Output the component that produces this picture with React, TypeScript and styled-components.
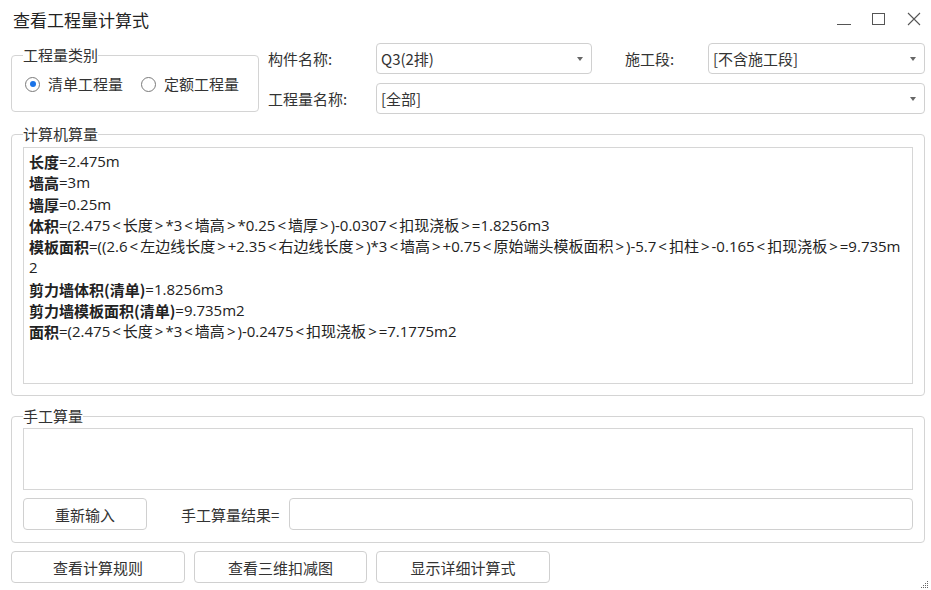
import styled, { createGlobalStyle } from 'styled-components'

const GlobalStyle = createGlobalStyle`
body {
  margin: 0;
  background: #fff;
  font-family: "Noto Sans CJK SC", "Noto Sans", sans-serif;
  color: #333;
}
`

const lines: [string, string][] = [
  ['长度', '=2.475m'],
  ['墙高', '=3m'],
  ['墙厚', '=0.25m'],
  ['体积', '=(2.475<长度>*3<墙高>*0.25<墙厚>)-0.0307<扣现浇板>=1.8256m3'],
  ['模板面积', '=((2.6<左边线长度>+2.35<右边线长度>)*3<墙高>+0.75<原始端头模板面积>)-5.7<扣柱>-0.165<扣现浇板>=9.735m'],
  ['', '2'],
  ['剪力墙体积(清单)', '=1.8256m3'],
  ['剪力墙模板面积(清单)', '=9.735m2'],
  ['面积', '=(2.475<长度>*3<墙高>)-0.2475<扣现浇板>=7.1775m2'],
]

// the angle brackets get a little air on both sides, as in the original font
const formula = (s: string) =>
  s.split(/([<>])/).map((part, i) =>
    part === '<' || part === '>' ? <Angle key={i}>{part}</Angle> : part
  )

const App = () => {
  return (
    <>
      <GlobalStyle />
      <Window>
        <TitleBar>
          <Title>查看工程量计算式</Title>
          <Controls>
            <svg width="14" height="14" viewBox="0 0 14 14">
              <line x1="0" y1="12.5" x2="14" y2="12.5" stroke="#555" strokeWidth="1" />
            </svg>
            <svg width="14" height="14" viewBox="0 0 14 14">
              <rect x="0.5" y="1.5" width="12" height="11" fill="none" stroke="#555" strokeWidth="1" />
            </svg>
            <svg width="14" height="14" viewBox="0 0 14 14">
              <path d="M1 1 L13 13 M13 1 L1 13" stroke="#555" strokeWidth="1.1" />
            </svg>
          </Controls>
        </TitleBar>

        <TopRow>
          <TypeGroup>
            <Legend>工程量类别</Legend>
            <RadioRow>
              <RadioItem>
                <Circle $checked />
                清单工程量
              </RadioItem>
              <RadioItem>
                <Circle />
                定额工程量
              </RadioItem>
            </RadioRow>
          </TypeGroup>

          <Form>
            <FormRow>
              <Label $w={108}>构件名称:</Label>
              <Combo $w={216}>
                <span>Q3(2排)</span>
                <Arrow />
              </Combo>
              <Label $w={83} $ml={33}>施工段:</Label>
              <Combo>
                <span>[不含施工段]</span>
                <Arrow />
              </Combo>
            </FormRow>
            <FormRow>
              <Label $w={108}>工程量名称:</Label>
              <Combo>
                <span>[全部]</span>
                <Arrow />
              </Combo>
            </FormRow>
          </Form>
        </TopRow>

        <Group $mt={10} $pt={3} $pb={11}>
          <Legend>计算机算量</Legend>
          <ResultBox>
            {lines.map(([b, rest], i) => (
              <Line key={i}>
                {b && <b>{b}</b>}
                {formula(rest)}
              </Line>
            ))}
          </ResultBox>
        </Group>

        <Group $mt={10} $pt={2} $pb={12}>
          <Legend>手工算量</Legend>
          <ManualArea />
          <ManualRow>
            <Button $w={124}>重新输入</Button>
            <ResultLabel>手工算量结果=</ResultLabel>
            <ResultInput />
          </ManualRow>
        </Group>

        <BottomBar>
          <Button $w={174}>查看计算规则</Button>
          <Button $w={173}>查看三维扣减图</Button>
          <Button $w={174}>显示详细计算式</Button>
        </BottomBar>

        <Grip width="8" height="8" viewBox="0 0 8 8">
          <rect x="6" y="0" width="1" height="1" fill="#666" />
          <rect x="4" y="2" width="1" height="1" fill="#666" />
          <rect x="6" y="2" width="1" height="1" fill="#666" />
          <rect x="2" y="4" width="1" height="1" fill="#666" />
          <rect x="4" y="4" width="1" height="1" fill="#666" />
          <rect x="6" y="4" width="1" height="1" fill="#666" />
          <rect x="0" y="6" width="1" height="1" fill="#666" />
          <rect x="2" y="6" width="1" height="1" fill="#666" />
          <rect x="4" y="6" width="1" height="1" fill="#666" />
          <rect x="6" y="6" width="1" height="1" fill="#666" />
        </Grip>
      </Window>
    </>
  )
}

export default App

const Window = styled.div`
position: relative;
width: 931px;
height: 590px;
box-sizing: border-box;
padding: 0 6px 0 11px;
background: #fff;
display: flex;
flex-direction: column;
overflow: hidden;
`

const TitleBar = styled.div`
height: 40px;
display: flex;
align-items: center;
justify-content: space-between;
`

const Title = styled.div`
padding-left: 2px;
font-size: 17px;
line-height: 24px;
color: #222;
`

const Controls = styled.div`
display: flex;
gap: 21px;
margin-right: 4px;
margin-top: -2px;
`

const TopRow = styled.div`
margin-top: 3px;
display: flex;
align-items: flex-start;
gap: 9px;
`

const Legend = styled.legend`
padding: 0;
margin: 0;
font-size: 15px;
line-height: 20px;
color: #333;
`

const TypeGroup = styled.fieldset`
margin: 2px 0 0 0;
width: 248px;
box-sizing: border-box;
border: 1px solid #d4d4d4;
border-radius: 4px;
padding: 9px 11px 17px 11px;
`

const RadioRow = styled.div`
display: flex;
gap: 18px;
padding-left: 2px;
height: 20px;
align-items: center;
`

const RadioItem = styled.label`
display: flex;
align-items: center;
gap: 8px;
font-size: 15px;
line-height: 20px;
color: #333;
`

const Circle = styled.span<{ $checked?: boolean }>`
position: relative;
width: 15px;
height: 15px;
box-sizing: border-box;
border: 1px solid #7a7a7a;
border-radius: 50%;
background: #fff;
&::after {
  content: "";
  display: ${(p) => (p.$checked ? 'block' : 'none')};
  position: absolute;
  left: 3.5px;
  top: 3.5px;
  width: 6px;
  height: 6px;
  border-radius: 50%;
  background: #1a73e8;
}
`

const Form = styled.div`
flex: 1;
display: flex;
flex-direction: column;
gap: 9px;
`

const FormRow = styled.div`
display: flex;
align-items: center;
height: 31px;
`

const Label = styled.div<{ $w: number; $ml?: number }>`
width: ${(p) => p.$w}px;
margin-left: ${(p) => p.$ml || 0}px;
flex-shrink: 0;
font-size: 15px;
color: #333;
`

const Combo = styled.div<{ $w?: number }>`
${(p) => (p.$w ? `width: ${p.$w}px; flex-shrink: 0;` : 'flex: 1;')}
height: 31px;
box-sizing: border-box;
border: 1px solid #d0d0d0;
border-radius: 4px;
display: flex;
align-items: center;
justify-content: space-between;
padding: 0 8px 0 4px;
font-size: 15px;
color: #333;
`

const Arrow = styled.span`
width: 0;
height: 0;
border-left: 3px solid transparent;
border-right: 3px solid transparent;
border-top: 4px solid #666;
`

const Group = styled.fieldset<{ $mt: number; $pt: number; $pb: number }>`
margin: ${(p) => p.$mt}px 0 0 0;
border: 1px solid #d4d4d4;
border-radius: 4px;
padding: ${(p) => p.$pt}px 11px ${(p) => p.$pb}px 11px;
min-width: 0;
`

const ResultBox = styled.div`
height: 237px;
box-sizing: border-box;
border: 1px solid #d6d6d6;
padding: 3px 5px;
overflow: hidden;
`

const Line = styled.div`
height: 21.25px;
display: flex;
align-items: center;
font-family: "Open Sans", "Noto Sans CJK SC", sans-serif;
font-size: 15px;
line-height: 21px;
white-space: pre;
color: #222;
b {
  font-weight: 700;
  font-family: "Noto Sans CJK SC", sans-serif;
}
`

const Angle = styled.span`
margin: 0 2px;
`

const ManualArea = styled.div`
height: 62px;
box-sizing: border-box;
border: 1px solid #d6d6d6;
`

const ManualRow = styled.div`
margin-top: 8px;
display: flex;
align-items: center;
`

const Button = styled.div<{ $w: number }>`
width: ${(p) => p.$w}px;
height: 32px;
box-sizing: border-box;
flex-shrink: 0;
border: 1px solid #d0d0d0;
border-radius: 4px;
background: #fff;
display: flex;
align-items: center;
justify-content: center;
font-size: 15px;
color: #333;
`

const ResultLabel = styled.div`
margin-left: 34px;
width: 108px;
font-size: 15px;
color: #333;
`

const ResultInput = styled.div`
flex: 1;
height: 32px;
box-sizing: border-box;
border: 1px solid #d0d0d0;
border-radius: 4px;
`

const BottomBar = styled.div`
margin-top: 8px;
display: flex;
gap: 9px;
`

const Grip = styled.svg`
position: absolute;
right: 2px;
bottom: 1px;
`
